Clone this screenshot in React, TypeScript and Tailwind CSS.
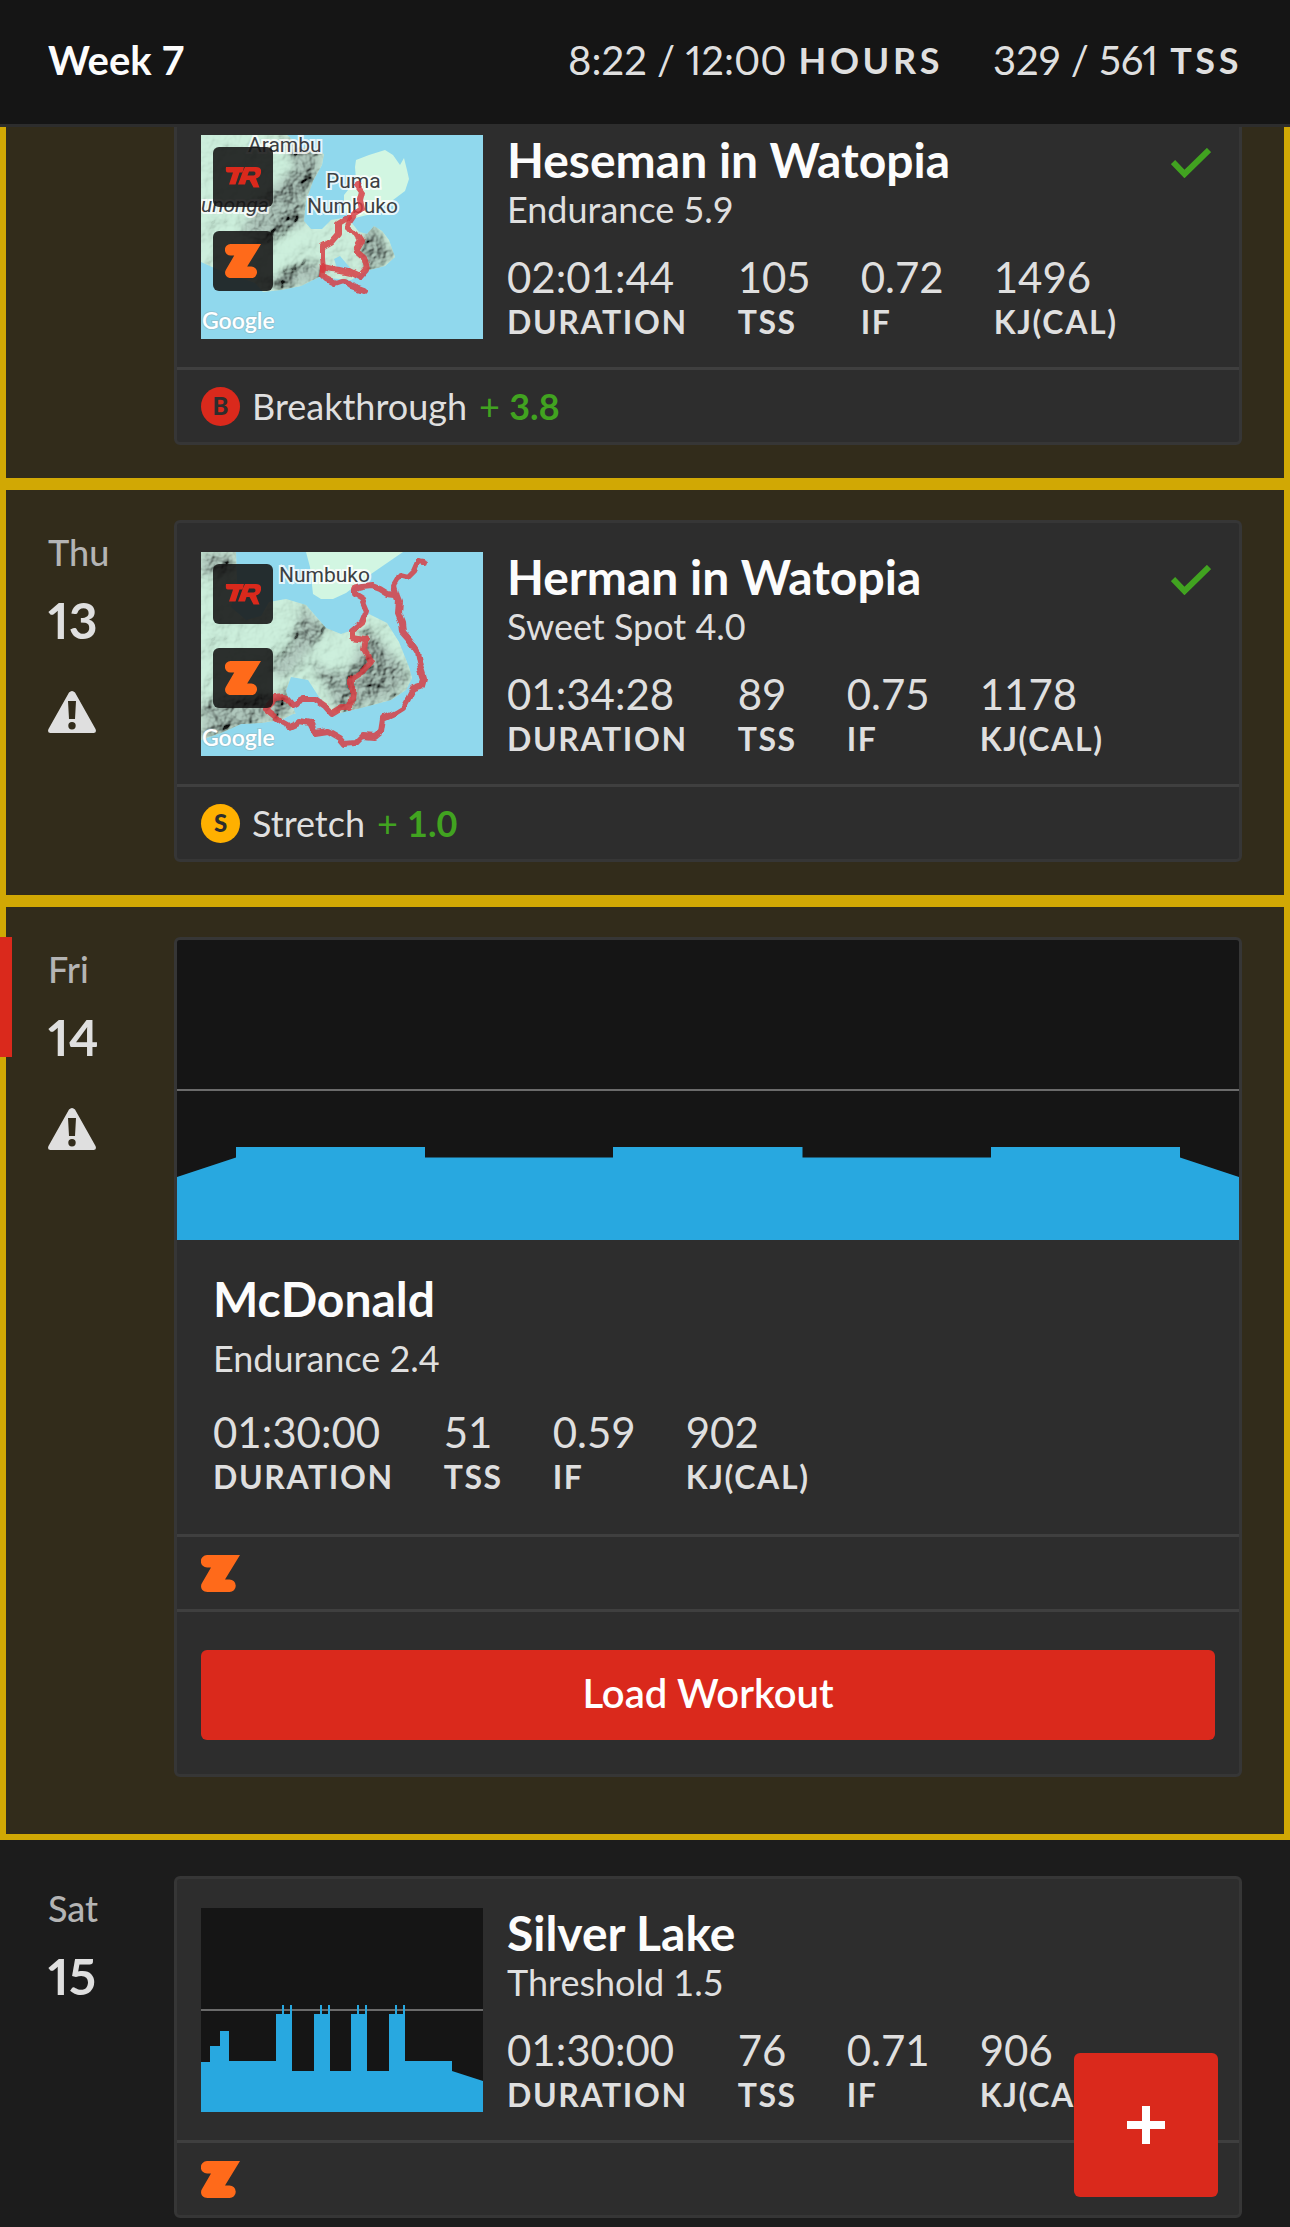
import React from "react";

interface Workout {
  title: string;
  level: string;
  duration: string;
  tss: string;
  intensity: string;
  kj: string;
}

function Stat({ value, label }: { value: string; label: string }) {
  return (
    <div>
      <dd className="text-[42px] leading-12">{value}</dd>
      <dt className="text-[32px] leading-[42px] font-bold tracking-wider">{label}</dt>
    </div>
  );
}

function Stats({ workout }: { workout: Workout }) {
  return (
    <dl className="flex gap-[50px] text-[#dfdfdf] *:flex *:flex-col">
      <Stat value={workout.duration} label="DURATION" />
      <Stat value={workout.tss} label="TSS" />
      <Stat value={workout.intensity} label="IF" />
      <Stat value={workout.kj} label="KJ(CAL)" />
    </dl>
  );
}

function ZwiftIcon({ className }: { className: string }) {
  return (
    <svg viewBox="0 0 39 37" className={className} fill="#ff6a1a" role="img" aria-label="Zwift">
      <path d="M6 0H39L24 24.5H28.500A6.200 6.200 0 0 1 28.500 37H6.500C1 37 -1.500 32 1 28L10 12.500H6.200A6.200 6.200 0 0 1 6 0Z" />
    </svg>
  );
}

function TrainerRoadIcon() {
  return (
    <svg viewBox="0 0 36 21" className="w-9" fill="#da291c" role="img" aria-label="TrainerRoad">
      <path d="M1 0H19L17.500 5.500H14.500L10.500 17.500H4L8 5.500H3Q0 5.500 1 0Z" />
      <path
        fillRule="evenodd"
        d="M20 0H31Q37 0 36 6Q35 10.500 31 11.500L34.500 20.500H28.500L24.500 13H21.500L20 17.500H13L18 4ZM24 4.500L22.500 8.500H28.500Q30.500 8.500 30.500 6.500Q30.500 4.500 29 4.500Z"
      />
    </svg>
  );
}

function CheckIcon() {
  return (
    <svg viewBox="0 0 40 30" className="mt-[6px] w-10 shrink-0" fill="none" role="img" aria-label="Completed">
      <path d="M2 14L13.500 26L38 2" stroke="#41a320" strokeWidth="6" />
    </svg>
  );
}

function WarningIcon() {
  return (
    <svg viewBox="0 0 48 42" className="w-12" role="img" aria-label="Warning">
      <path
        fillRule="evenodd"
        fill="#dfdfdf"
        d="M21 1.500Q24 -1.500 27 1.500L47.500 38Q49 42 45.500 42H2.500Q-1 42 .5 38ZM20 10L21 28H27L28 10ZM24 31A3.700 3.700 0 1 0 24 38.400A3.700 3.700 0 1 0 24 31Z"
      />
    </svg>
  );
}

interface MapLabel {
  text: string;
  x: number;
  y: number;
  italic?: boolean;
}

interface RideMapProps {
  id: string;
  land: string[];
  ridges: string[];
  ponds: string;
  route: string[];
  labels: MapLabel[];
}

function RideMap({ id, land, ridges, ponds, route, labels }: RideMapProps) {
  return (
    <div className="relative h-[204px] w-[282px] shrink-0">
      <svg viewBox="0 0 282 204" className="size-full bg-[#90d8ed]" role="img" aria-label="Ride map">
        <defs>
          {/* hill shading */}
          <filter id={`${id}-relief`} x="0" y="0" width="100%" height="100%">
            <feTurbulence type="fractalNoise" baseFrequency="0.04" numOctaves="4" seed="8" result="noise" />
            <feDiffuseLighting in="noise" surfaceScale="11" diffuseConstant="1.1" lightingColor="#a9c0b5">
              <feDistantLight azimuth="225" elevation="46" />
            </feDiffuseLighting>
          </filter>
          <filter id={`${id}-soft`} x="-20%" y="-20%" width="140%" height="140%">
            <feGaussianBlur stdDeviation="4" />
          </filter>
          <filter id={`${id}-wobble`}>
            <feTurbulence type="fractalNoise" baseFrequency="0.08" numOctaves="1" seed="3" />
            <feDisplacementMap in="SourceGraphic" scale="8" xChannelSelector="R" yChannelSelector="G" />
          </filter>
          <clipPath id={`${id}-land`}>
            <path d={land[0]} />
          </clipPath>
          <mask id={`${id}-ridges`}>
            <rect width="282" height="204" fill="#242424" />
            <g filter={`url(#${id}-soft)`} fill="#fff">
              {ridges.map((d) => (
                <path key={d} d={d} />
              ))}
            </g>
          </mask>
        </defs>
        {land.map((d) => (
          <path key={d} d={d} fill="#d2f6e2" />
        ))}
        <g clipPath={`url(#${id}-land)`}>
          <g mask={`url(#${id}-ridges)`}>
            <rect width="282" height="204" filter={`url(#${id}-relief)`} />
          </g>
        </g>
        <path d={ponds} fill="#90d8ed" />
        <g
          fontFamily="Roboto, sans-serif"
          fontSize="21"
          fill="#3c4043"
          stroke="#fff"
          strokeOpacity="0.8"
          strokeWidth="4"
          paintOrder="stroke"
        >
          {labels.map((l) => (
            <text key={l.text} x={l.x} y={l.y} fontStyle={l.italic ? "italic" : "normal"}>
              {l.text}
            </text>
          ))}
        </g>
        <g
          fill="none"
          stroke="#d83a3f"
          strokeOpacity="0.82"
          strokeWidth="6"
          strokeLinecap="round"
          strokeLinejoin="round"
          filter={`url(#${id}-wobble)`}
        >
          {route.map((points) => (
            <polyline key={points} points={points} />
          ))}
        </g>
        <text
          x="1"
          y="194"
          fontFamily="Lato, sans-serif"
          fontSize="23"
          fontWeight="600"
          fill="#fff"
          stroke="#8fa9ae"
          strokeOpacity="0.4"
          strokeWidth="2"
          paintOrder="stroke"
        >
          Google
        </text>
      </svg>
      <div className="absolute top-3 left-3 flex flex-col gap-6">
        <span className="flex size-[60px] items-center justify-center rounded-md bg-[#151515]/88">
          <TrainerRoadIcon />
        </span>
        <span className="flex size-[60px] items-center justify-center rounded-md bg-[#151515]/88">
          <ZwiftIcon className="w-9" />
        </span>
      </div>
    </div>
  );
}

function PumaMap() {
  return (
    <RideMap
      id="puma"
      land={[
        "M0 0H86L100 12L123 19L121 30L112 46L105 66L103 86L110 94L121 94L130 85L142 83L150 87L158 97L166 99L173 91L181 96L188 105L194 122L184 131L165 136L150 145L128 143L118 142L100 151L80 155L62 157L54 148L20 136L0 127Z",
        "M155 25L168 20L184 15L192 20L199 30L203 23L206 35L208 44L204 56L188 68L170 79L150 84L143 75L143 60L155 45L154 32Z",
      ]}
      ridges={[
        "M75 48L100 28L122 28L104 66L102 90L85 95L60 110L40 95Z",
        "M60 150L100 128L120 130L128 143L80 155Z",
        "M160 100L173 91L194 122L165 136Z",
        "M80 0L123 19L120 30L95 35Z",
      ]}
      ponds="M133 124L139 121L145 128L150 134L136 133Z"
      route={[
        "156,50 161,57 159,65 161,74 153,79 149,85 146,92 156,98 161,106 155,116 163,123 166,134 159,142 149,137 139,135 131,134 122,132 121,139 126,144 134,148 143,145 151,151 162,155",
        "147,83 137,89 137,99 130,107 121,112 121,124 122,134",
      ]}
      labels={[
        { text: "Arambu", x: 47, y: 17 },
        { text: "Puma", x: 125, y: 53 },
        { text: "Numbuko", x: 106, y: 78 },
        { text: "unonga", x: 0, y: 77, italic: true },
      ]}
    />
  );
}

function NumbukoMap() {
  return (
    <RideMap
      id="numbuko"
      land={[
        "M0 0H35L36 30L30 55L45 68L60 64L68 50L85 47L105 53L125 76L140 82L155 77L168 62L186 71L198 90L208 115L211 126L205 138L190 148L160 156L135 162L92 162L80 168L60 171L40 172L20 181L0 188Z",
        "M105 0H202L170 22L145 41L132 47L120 47L112 42L109 15Z",
      ]}
      ridges={[
        "M0 0H35L30 22L0 25Z",
        "M102 53L125 76L112 95L90 120L75 128L72 112L90 95Z",
        "M165 75L190 100L210 126L190 148L138 160L125 140L150 115Z",
        "M0 150L90 140L92 162L0 188Z",
        "M110 108L130 122L150 120L125 135Z",
      ]}
      ponds="M85 139L90 125L107 128L118 145L134 163L95 163L92 155L88 148Z"
      route={[
        "223,11 217,10 213,19 207,25 199,23 196,29 193,34 196,44 198,49 197,61 201,71 202,81 209,89 216,99 219,114 223,127 221,134 212,137 207,147 202,156 194,161 183,166 181,179 174,185 161,184 154,191 144,192 139,186 127,179 114,181 109,171 99,169 88,174 79,169 64,157 74,146 84,145 91,153 102,147 114,147 124,154 131,162 141,156 149,156 151,139 151,126 162,119 170,109 163,97 165,87 151,85 151,79 161,71 166,59 161,47 153,42 153,37 161,35 171,34 179,37 187,42 195,43",
      ]}
      labels={[{ text: "Numbuko", x: 78, y: 30 }]}
    />
  );
}

function SteadyChart() {
  return (
    <svg viewBox="0 0 1062 300" preserveAspectRatio="none" className="h-[300px] w-full bg-[#151515]" role="img" aria-label="Workout profile">
      <rect y="149" width="1062" height="2" fill="#6b6b6b" />
      <path
        fill="#28a8e0"
        d="M0 237L59 217.500V207H248V217.500H436V207H625.500V217.500H814V207H1003V217.500L1062 237V300H0Z"
      />
    </svg>
  );
}

function IntervalChart() {
  return (
    <svg viewBox="0 0 282 204" className="h-[204px] w-[282px] shrink-0 bg-[#151515]" role="img" aria-label="Workout profile">
      <rect y="101" width="282" height="2" fill="#6b6b6b" />
      <path
        fill="#28a8e0"
        d="M0 154H9V138H19V123H28V153H75V163H251L282 173V204H0ZM188 153H251V163H188Z"
      />
      {[75, 113, 150, 188].map((x) => (
        <path
          key={x}
          fill="#28a8e0"
          transform={`translate(${x})`}
          d="M0 106H6V97H8V106H14V97H16V164H0Z"
        />
      ))}
    </svg>
  );
}

function Day({ name, date, alert }: { name: string; date: string; alert?: boolean }) {
  return (
    <div className="w-[126px] shrink-0 pt-[10px]">
      <p className="text-[36px] leading-11 font-medium text-[#b4b4b4]">{name}</p>
      <p className="mt-[18px] text-[50px] leading-14 font-bold text-[#dfdfdf] proportional-nums">{date}</p>
      {alert && (
        <div className="mt-[43px]">
          <WarningIcon />
        </div>
      )}
    </div>
  );
}

function Card({ children }: { children: React.ReactNode }) {
  return (
    <article className="min-w-0 flex-1 overflow-hidden rounded-md border-3 border-[#363636] bg-[#2d2d2d]">
      {children}
    </article>
  );
}

function CompactWorkout({
  workout,
  thumbnail,
  done,
}: {
  workout: Workout;
  thumbnail: React.ReactNode;
  done?: boolean;
}) {
  return (
    <div className="flex items-start gap-6 px-6 pt-[29px] pb-6">
      {thumbnail}
      <div className="min-w-0 flex-1">
        <div className="flex items-center justify-between pr-1">
          <h2 className="text-[48px] leading-[50px] font-bold text-[#fcfcfc]">{workout.title}</h2>
          {done && <CheckIcon />}
        </div>
        <p className="mb-5 text-[36px] leading-12 text-[#dfdfdf]">{workout.level}</p>
        <Stats workout={workout} />
      </div>
    </div>
  );
}

function CardFooter({ children }: { children: React.ReactNode }) {
  return (
    <div className="flex h-[75px] items-center border-t-3 border-[#3f3f3f] px-6 text-[36px] text-[#dfdfdf]">
      {children}
    </div>
  );
}

const heseman: Workout = {
  title: "Heseman in Watopia",
  level: "Endurance 5.9",
  duration: "02:01:44",
  tss: "105",
  intensity: "0.72",
  kj: "1496",
};

const herman: Workout = {
  title: "Herman in Watopia",
  level: "Sweet Spot 4.0",
  duration: "01:34:28",
  tss: "89",
  intensity: "0.75",
  kj: "1178",
};

const mcdonald: Workout = {
  title: "McDonald",
  level: "Endurance 2.4",
  duration: "01:30:00",
  tss: "51",
  intensity: "0.59",
  kj: "902",
};

const silverLake: Workout = {
  title: "Silver Lake",
  level: "Threshold 1.5",
  duration: "01:30:00",
  tss: "76",
  intensity: "0.71",
  kj: "906",
};

export default function App() {
  return (
    <div className="flex h-screen flex-col overflow-hidden bg-[#1c1c1c] font-['Lato',sans-serif]">
      <header className="flex h-[127px] shrink-0 items-center justify-between border-b-3 border-[#2d2d2d] bg-[#151515] px-12 pb-1 text-[40px] text-[#dfdfdf]">
        <h1 className="font-bold text-[#fcfcfc]">Week 7</h1>
        <div className="flex gap-[50px] proportional-nums">
          <p className="flex items-center gap-3">
            8:22 / 12:00 <span className="text-[36px] font-bold tracking-widest">HOURS</span>
          </p>
          <p className="flex items-center gap-3">
            329 / 561 <span className="text-[36px] font-bold tracking-widest">TSS</span>
          </p>
        </div>
      </header>

      <main className="min-h-0 flex-1 overflow-hidden">
        {/* the list is scrolled a little, the first card slides under the header */}
        <div className="-mt-[60px]">
          <section className="flex border-6 border-[#d1a804] bg-[#322c1b] pt-[30px] pr-[42px] pb-[33px] pl-[168px]">
            <Card>
              <CompactWorkout workout={heseman} thumbnail={<PumaMap />} done />
              <CardFooter>
                <span className="mr-3 flex size-[39px] items-center justify-center rounded-full bg-[#da291c] text-2xl font-black text-[#2d2d2d]">
                  B
                </span>
                Breakthrough
                <span className="ml-3 text-[#41a320]">
                  + <b>3.8</b>
                </span>
              </CardFooter>
            </Card>
          </section>

          <section className="flex border-6 border-[#d1a804] bg-[#322c1b] pt-[30px] pr-[42px] pb-[33px] pl-[42px]">
            <Day name="Thu" date="13" alert />
            <Card>
              <CompactWorkout workout={herman} thumbnail={<NumbukoMap />} done />
              <CardFooter>
                <span className="mr-3 flex size-[39px] items-center justify-center rounded-full bg-[#ffb000] text-2xl font-black text-[#2d2d2d]">
                  S
                </span>
                Stretch
                <span className="ml-3 text-[#41a320]">
                  + <b>1.0</b>
                </span>
              </CardFooter>
            </Card>
          </section>

          <section className="relative flex border-6 border-[#d1a804] bg-[#322c1b] pt-[30px] pr-[42px] pb-[57px] pl-[42px]">
            {/* today marker */}
            <span className="absolute top-[30px] -left-[6px] h-[120px] w-3 bg-[#da291c]" />
            <Day name="Fri" date="14" alert />
            <Card>
              <SteadyChart />
              <div className="px-9 pt-[34px] pb-9">
                <h2 className="text-[48px] leading-[50px] font-bold text-[#fcfcfc]">{mcdonald.title}</h2>
                <p className="mt-[10px] mb-[26px] text-[36px] leading-12 text-[#dfdfdf]">{mcdonald.level}</p>
                <Stats workout={mcdonald} />
              </div>
              <CardFooter>
                <ZwiftIcon className="w-[39px]" />
              </CardFooter>
              <div className="border-t-3 border-[#3f3f3f] px-6 pt-[38px] pb-[34px]">
                <button
                  type="button"
                  className="h-[90px] w-full rounded-md bg-[#da291c] pb-1 text-[40px] font-semibold text-white"
                >
                  Load Workout
                </button>
              </div>
            </Card>
          </section>

          <section className="flex px-12 pt-9 pb-[39px]">
            <Day name="Sat" date="15" />
            <Card>
              <CompactWorkout workout={silverLake} thumbnail={<IntervalChart />} />
              <CardFooter>
                <ZwiftIcon className="w-[39px]" />
              </CardFooter>
            </Card>
          </section>
        </div>
      </main>

      <button
        type="button"
        aria-label="Add workout"
        className="fixed right-[72px] bottom-[30px] flex size-36 items-center justify-center rounded-md bg-[#da291c]"
      >
        <svg viewBox="0 0 38 38" className="w-[38px]">
          <path d="M19 0V38M0 19H38" stroke="#fff" strokeWidth="8" />
        </svg>
      </button>
    </div>
  );
}
